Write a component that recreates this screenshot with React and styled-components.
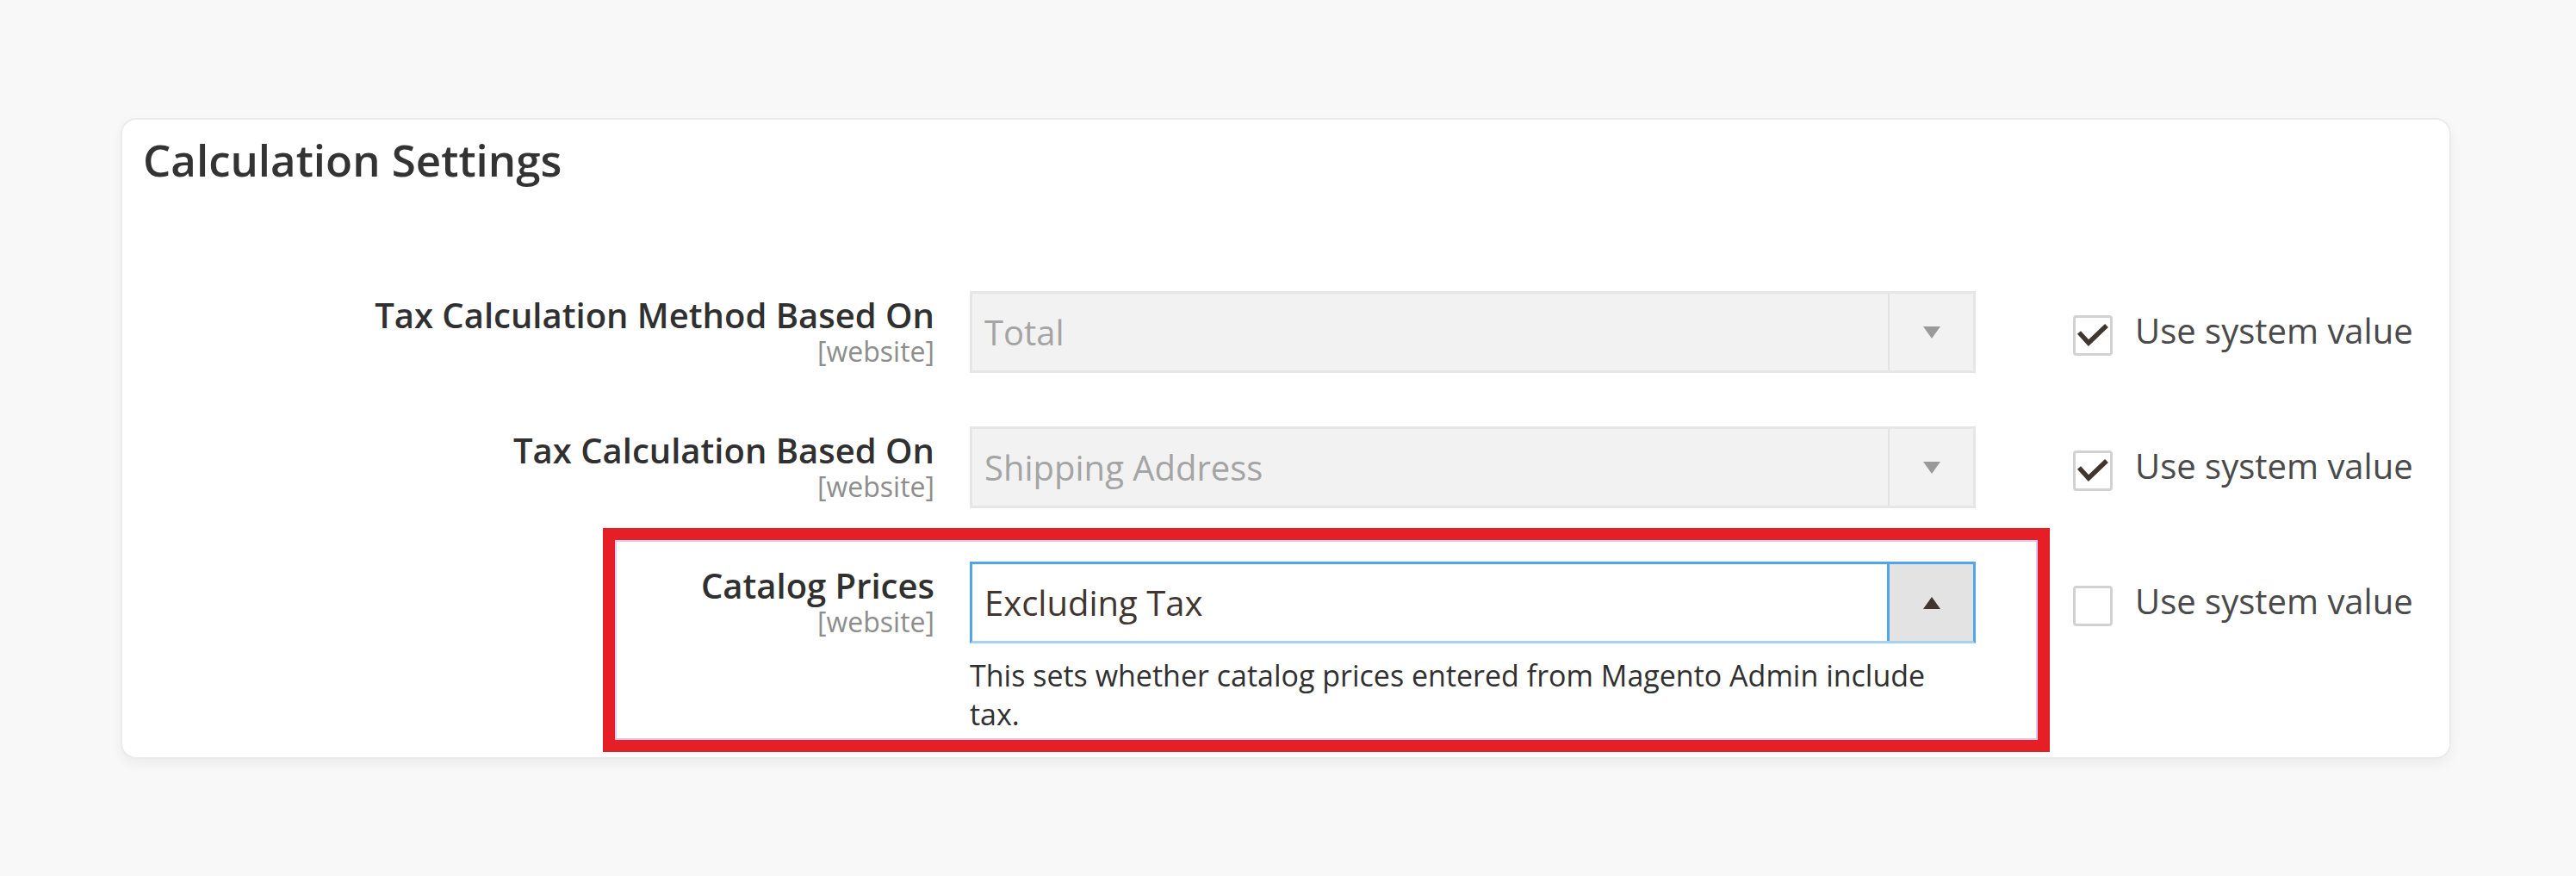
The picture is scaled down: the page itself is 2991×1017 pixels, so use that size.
import React from 'react';
import styled, { createGlobalStyle } from 'styled-components';

const GlobalStyle = createGlobalStyle`
  html, body {
    margin: 0;
    padding: 0;
    background: #f8f8f8;
  }
  body {
    font-family: 'Open Sans', 'Liberation Sans', sans-serif;
    color: #303030;
  }
`;

const Page = styled.div`
  min-height: 1017px;
  padding: 137px 0 0 140px;
  box-sizing: border-box;
`;

const Card = styled.section`
  width: 2706px;
  box-sizing: border-box;
  background: #fff;
  border: 2px solid #ebebeb;
  border-radius: 18px;
  box-shadow: 0 6px 14px rgba(0, 0, 0, 0.05);
  padding: 16px 0 27px 0;
`;

const Title = styled.h2`
  margin: 0;
  padding-left: 24px;
  font-size: 51px;
  line-height: 61px;
  font-weight: 600;
  color: #333;
`;

const Fields = styled.div`
  margin-top: 122px;
  display: flex;
  flex-direction: column;
  gap: 62px;
`;

const Row = styled.div`
  position: relative;
  display: grid;
  grid-template-columns: 943px 1168px 1fr;
  column-gap: 41px;
  align-items: start;
`;

const LabelCell = styled.div`
  padding-top: 4px;
  text-align: right;
`;

const Label = styled.div`
  font-size: 40px;
  line-height: 48px;
  font-weight: 600;
  color: #303030;
`;

const Scope = styled.div`
  font-size: 32px;
  line-height: 36px;
  color: #8d8d8d;
`;

const Control = styled.div`
  display: flex;
  flex-direction: column;
`;

const Select = styled.div`
  display: flex;
  height: 95px;
  box-sizing: border-box;
  background: ${(p) => (p.$active ? '#fff' : '#f2f2f2')};
  border: 3px solid ${(p) => (p.$active ? '#52a5e8' : '#e6e6e6')};
  border-bottom-color: ${(p) => (p.$active ? '#a4d0f2' : '#e6e6e6')};
`;

const Value = styled.div`
  flex: 1;
  display: flex;
  align-items: center;
  padding-left: 14px;
  font-size: 40px;
  color: ${(p) => (p.$active ? '#41362f' : '#a4a4a4')};
`;

const ArrowButton = styled.div`
  width: 97px;
  display: flex;
  align-items: center;
  justify-content: center;
  background: ${(p) => (p.$active ? '#e3e3e3' : '#f2f2f2')};
  border-left: ${(p) => (p.$active ? '3px solid #52a5e8' : '2px solid #e2e2e2')};
`;

const Note = styled.div`
  margin-top: 15px;
  font-size: 34px;
  line-height: 45px;
  color: #303030;
`;

const UseDefault = styled.label`
  display: flex;
  align-items: flex-start;
  padding-left: 72px;
  gap: 26px;
`;

const Box = styled.span`
  margin-top: 28px;
  width: 46px;
  height: 47px;
  box-sizing: border-box;
  border: 3px solid #d2d2d2;
  border-radius: 4px;
  background: #fff;
  display: flex;
`;

const UseText = styled.span`
  margin-top: 23px;
  font-size: 40px;
  line-height: 45px;
  color: #4a4a4a;
`;

const Highlight = styled.div`
  position: absolute;
  left: 558px;
  top: -39px;
  width: 1680px;
  height: 260px;
  box-sizing: border-box;
  border: 14px solid #e61e25;
  box-shadow: inset 0 0 0 2px #d4cdfa;
  pointer-events: none;
`;

const Triangle = ({ up, color }) => (
  <svg width="20" height="14" viewBox="0 0 20 14">
    <polygon points={up ? '10,0 20,14 0,14' : '0,0 20,0 10,14'} fill={color} />
  </svg>
);

const Check = () => (
  <svg width="40" height="41" viewBox="0 0 40 41">
    <path d="M4 17 L15 29 L36 9" fill="none" stroke="#41362f" strokeWidth="5.5" />
  </svg>
);

const fields = [
  { label: 'Tax Calculation Method Based On', value: 'Total', checked: true },
  { label: 'Tax Calculation Based On', value: 'Shipping Address', checked: true },
  {
    label: 'Catalog Prices',
    value: 'Excluding Tax',
    active: true,
    note: ['This sets whether catalog prices entered from Magento Admin include', 'tax.'],
  },
];

export default function App() {
  return (
    <Page>
      <GlobalStyle />
      <Card>
        <Title>Calculation Settings</Title>
        <Fields>
          {fields.map((f) => (
            <Row key={f.label}>
              <LabelCell>
                <Label>{f.label}</Label>
                <Scope>[website]</Scope>
              </LabelCell>
              <Control>
                <Select $active={f.active}>
                  <Value $active={f.active}>{f.value}</Value>
                  <ArrowButton $active={f.active}>
                    <Triangle up={f.active} color={f.active ? '#41362f' : '#9a9a9a'} />
                  </ArrowButton>
                </Select>
                {f.note && (
                  <Note>
                    {f.note[0]}
                    <br />
                    {f.note[1]}
                  </Note>
                )}
              </Control>
              <UseDefault>
                <Box>{f.checked && <Check />}</Box>
                <UseText>Use system value</UseText>
              </UseDefault>
              {f.active && <Highlight />}
            </Row>
          ))}
        </Fields>
      </Card>
    </Page>
  );
}
